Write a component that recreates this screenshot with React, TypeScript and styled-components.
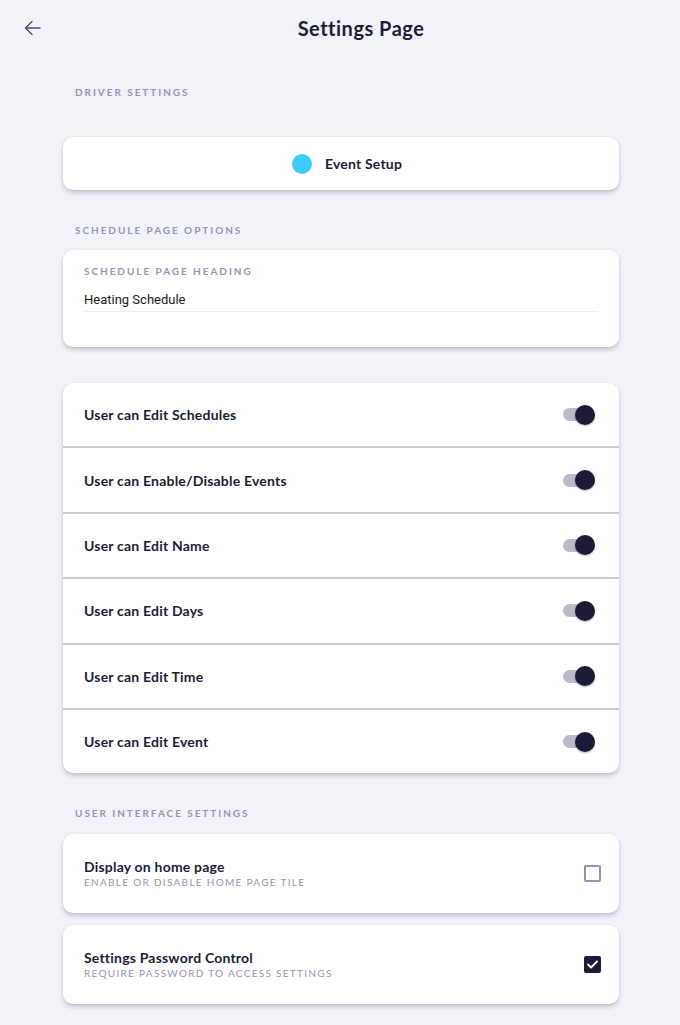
import React from "react";
import styled, { createGlobalStyle } from "styled-components";

const GlobalStyle = createGlobalStyle`
  html, body { margin: 0; padding: 0; background: #f2f3f9; }
  body { font-family: "Lato", "Noto Sans", sans-serif; color: #1c1c36; }
  * { box-sizing: border-box; }
`;

const Page = styled.div`
  width: 680px;
  min-height: 1025px;
  background: #f2f3f9;
`;

const Header = styled.header`
  height: 55px;
  display: flex;
  align-items: center;
  padding-left: 22px;
`;

const BackButton = styled.button`
  width: 20px;
  height: 20px;
  padding: 0;
  border: 0;
  background: none;
  display: flex;
  align-items: center;
  justify-content: center;
  color: #4a4a5c;
`;

const Title = styled.h1`
  flex: 1;
  margin: 0;
  text-align: center;
  font-size: 20px;
  font-weight: 700;
  color: #1d1d38;
  letter-spacing: 0.5px;
`;

const Content = styled.main`
  padding: 0 61px 0 63px;
  display: flex;
  flex-direction: column;
`;

const SectionLabel = styled.div<{ $top: number; $bottom: number }>`
  margin: ${(p) => p.$top}px 0 ${(p) => p.$bottom}px 12px;
  font-size: 10px;
  line-height: 14px;
  font-weight: 700;
  letter-spacing: 1.95px;
  color: #9696b2;
  text-transform: uppercase;
`;

const Card = styled.section<{ $mt?: number }>`
  margin-top: ${(p) => p.$mt ?? 0}px;
  background: #fff;
  border-radius: 10px;
  box-shadow: 0 3px 4px rgba(40, 40, 70, 0.22), 0 0 2px rgba(40, 40, 70, 0.08);
  overflow: hidden;
`;

const EventButton = styled.div`
  height: 53px;
  display: flex;
  align-items: center;
  justify-content: center;
  gap: 13px;
  padding-left: 12px;
  font-size: 14px;
  font-weight: 700;
  letter-spacing: 0.2px;
  color: #1c1c36;
`;

const Dot = styled.span`
  width: 20px;
  height: 20px;
  border-radius: 50%;
  background: #3fcaf7;
`;

const FieldCard = styled.div`
  height: 97px;
  padding: 14px 21px 0;
`;

const FieldLabel = styled.div`
  font-size: 10px;
  line-height: 14px;
  font-weight: 700;
  letter-spacing: 1.95px;
  color: #9696b2;
`;

const FieldInput = styled.div`
  margin-top: 14px;
  padding-bottom: 3px;
  border-bottom: 1px solid #eeeef4;
  font-family: "Roboto", sans-serif;
  font-size: 13px;
  line-height: 16px;
  color: #1a1a1a;
`;

const ToggleRow = styled.div`
  height: 65.4px;
  display: flex;
  align-items: center;
  justify-content: space-between;
  padding: 0 24px 0 21px;
  border-bottom: 2px solid #c9c9d1;
  &:last-child { border-bottom: 0; height: 63.4px; }
`;

const RowLabel = styled.span`
  font-size: 14px;
  font-weight: 700;
  letter-spacing: 0.2px;
  color: #1c1c36;
`;

const Toggle = styled.span`
  position: relative;
  width: 32px;
  height: 20px;
  display: flex;
  align-items: center;
`;

const Track = styled.span`
  width: 28px;
  height: 13px;
  border-radius: 7px;
  background: #babac8;
`;

const Knob = styled.span`
  position: absolute;
  right: 0;
  top: 0;
  width: 20px;
  height: 20px;
  border-radius: 50%;
  background: #1b1b38;
  box-shadow: 0 1px 2px rgba(0, 0, 0, 0.3);
`;

const CheckRow = styled.div`
  height: 79px;
  display: flex;
  align-items: center;
  justify-content: space-between;
  padding: 0 18px 0 21px;
`;

const TextBlock = styled.div`
  display: flex;
  flex-direction: column;
  gap: 1px;
`;

const CheckTitle = styled.span`
  font-size: 14px;
  line-height: 16px;
  font-weight: 700;
  letter-spacing: 0.2px;
  color: #1c1c36;
`;

const CheckSub = styled.span`
  font-size: 10px;
  line-height: 13px;
  letter-spacing: 1.3px;
  color: #9696b2;
`;

const CheckBox = styled.span<{ $checked: boolean }>`
  width: 17px;
  height: 17px;
  border-radius: 2px;
  border: 2px solid ${(p) => (p.$checked ? "#1c1c3a" : "#9393ad")};
  background: ${(p) => (p.$checked ? "#1c1c3a" : "#fff")};
  display: flex;
  align-items: center;
  justify-content: center;
`;

const toggles = [
  "User can Edit Schedules",
  "User can Enable/Disable Events",
  "User can Edit Name",
  "User can Edit Days",
  "User can Edit Time",
  "User can Edit Event",
];

const checks = [
  { title: "Display on home page", sub: "ENABLE OR DISABLE HOME PAGE TILE", checked: false },
  { title: "Settings Password Control", sub: "REQUIRE PASSWORD TO ACCESS SETTINGS", checked: true },
];

export default function App() {
  return (
    <Page>
      <GlobalStyle />
      <Header>
        <BackButton aria-label="Back">
          <svg width="17" height="16" viewBox="0 0 17 16" fill="none" stroke="currentColor" strokeWidth="1.4" strokeLinecap="round" strokeLinejoin="round">
            <path d="M16 8H2" />
            <path d="M8 1.5L1.5 8L8 14.5" />
          </svg>
        </BackButton>
        <Title>Settings Page</Title>
      </Header>
      <Content>
        <SectionLabel $top={30} $bottom={38}>Driver Settings</SectionLabel>
        <Card>
          <EventButton>
            <Dot />
            Event Setup
          </EventButton>
        </Card>
        <SectionLabel $top={33} $bottom={13}>Schedule Page Options</SectionLabel>
        <Card>
          <FieldCard>
            <FieldLabel>SCHEDULE PAGE HEADING</FieldLabel>
            <FieldInput>Heating Schedule</FieldInput>
          </FieldCard>
        </Card>
        <Card $mt={36}>
          {toggles.map((t) => (
            <ToggleRow key={t}>
              <RowLabel>{t}</RowLabel>
              <Toggle>
                <Track />
                <Knob />
              </Toggle>
            </ToggleRow>
          ))}
        </Card>
        <SectionLabel $top={33} $bottom={14}>User Interface Settings</SectionLabel>
        {checks.map((c, i) => (
          <Card key={c.title} $mt={i === 0 ? 0 : 12}>
            <CheckRow>
              <TextBlock>
                <CheckTitle>{c.title}</CheckTitle>
                <CheckSub>{c.sub}</CheckSub>
              </TextBlock>
              <CheckBox $checked={c.checked}>
                {c.checked && (
                  <svg width="11" height="9" viewBox="0 0 11 9" fill="none" stroke="#fff" strokeWidth="1.8" strokeLinecap="round" strokeLinejoin="round">
                    <path d="M1 4.5L4 7.5L10 1.5" />
                  </svg>
                )}
              </CheckBox>
            </CheckRow>
          </Card>
        ))}
      </Content>
    </Page>
  );
}
